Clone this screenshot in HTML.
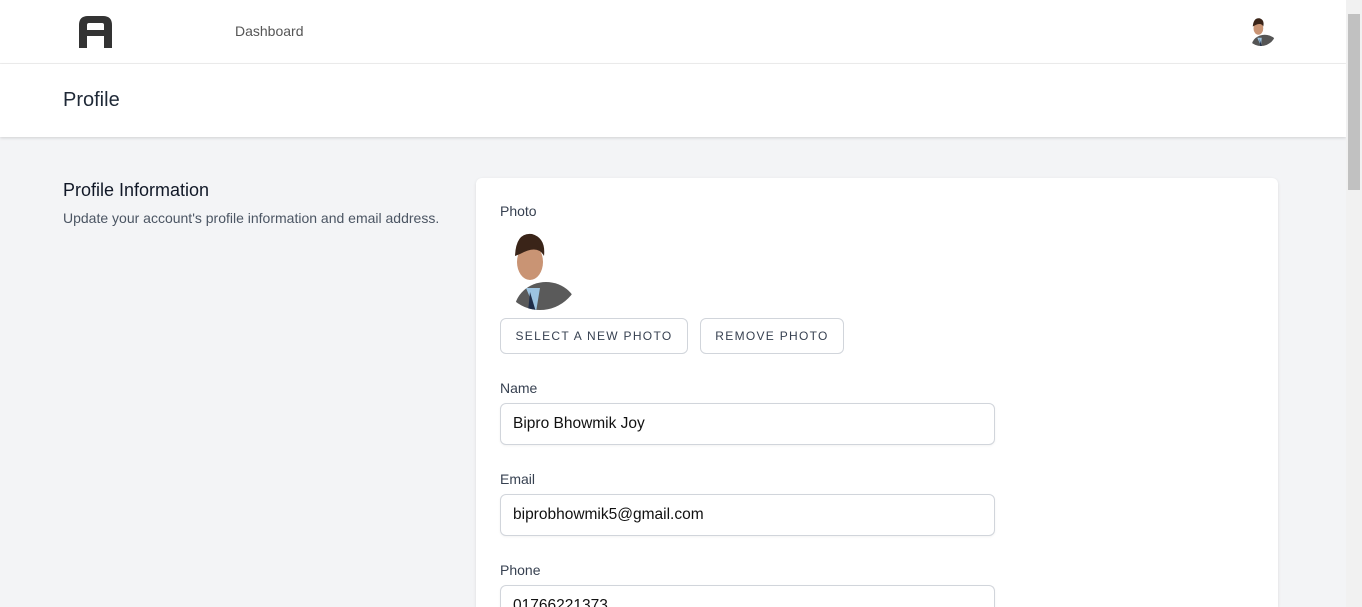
<!DOCTYPE html>
<html style="overflow:hidden;height:607px"><head><style>
*{box-sizing:border-box;margin:0;padding:0}
body{width:1362px;height:607px;overflow:hidden;font-family:"Liberation Sans",sans-serif;background:#f3f4f6;position:relative;color:#374151}
.nav{position:absolute;left:0;top:0;width:1346px;height:64px;background:#fff;border-bottom:1px solid #f0f0f0}
.hdr{position:absolute;left:0;top:64px;width:1346px;height:73px;background:#fff;box-shadow:0 1px 3px rgba(0,0,0,.15)}
.sb{position:absolute;right:0;top:0;width:16px;height:607px;background:#f1f1f1}
.sb div{position:absolute;left:2px;top:14px;width:12px;height:176px;background:#c1c1c1}
.card{position:absolute;left:476px;top:178px;width:802px;height:429px;background:#fff;border-radius:6px 6px 0 0;box-shadow:0 1px 3px rgba(0,0,0,.1)}
.lbl{position:absolute;left:500px;font-size:14px;color:#374151}
.inp{position:absolute;left:500px;width:495px;height:42px;border:1px solid #d1d5db;border-radius:6px;background:#fff;font-size:15.5px;color:#111;padding:11px 12px;box-shadow:0 1px 2px rgba(0,0,0,.05)}
.btn{position:absolute;top:318px;height:36px;border:1px solid #d1d5db;border-radius:6px;background:#fff;font-size:12px;letter-spacing:1.3px;color:#374151;text-align:center;line-height:34px}
.face{position:absolute;border-radius:50%;overflow:hidden;background:#fff}
</style></head><body>
<div class="nav">
<svg style="position:absolute;left:79px;top:16px" width="33" height="32" viewBox="0 0 33 32"><path d="M0 32V9Q0 0 9 0H24Q33 0 33 9V32H25V20H8V32ZM8 14H25V9Q25 7 23 7H10Q8 7 8 9Z" fill="#333"/></svg>
<div style="position:absolute;left:235px;top:23px;font-size:14px;color:#555">Dashboard</div>
<div class="face" style="left:1246px;top:16px;width:30px;height:30px">
<svg width="30" height="30" viewBox="0 0 80 80"><ellipse cx="50" cy="80" rx="35" ry="30" fill="#555"/><path d="M30 58L40 80L42 58Z" fill="#9cc3e0"/><path d="M36 60L38 80L42 80Z" fill="#1f2d48"/><ellipse cx="33" cy="33" rx="13" ry="17" fill="#c99474"/><path d="M18 28Q20 4 36 6Q50 10 46 28Q40 16 22 26Z" fill="#3a2418"/></svg></div>
</div>
<div class="hdr"><div style="position:absolute;left:63px;top:25px;font-size:20px;color:#1f2937">Profile</div></div>
<div style="position:absolute;left:63px;top:180px;font-size:18px;color:#111827">Profile Information</div>
<div style="position:absolute;left:63px;top:210px;font-size:14px;color:#4b5563">Update your account's profile information and email address.</div>
<div class="card"></div>
<div class="lbl" style="top:203px">Photo</div>
<div class="face" style="left:500px;top:230px;width:80px;height:80px">
<svg width="80" height="80" viewBox="0 0 80 80"><ellipse cx="46" cy="82" rx="32" ry="30" fill="#5a5a5a"/><path d="M26 58L36 82L40 58Z" fill="#9cc3e0"/><path d="M30 62L28 82L36 82Z" fill="#1f2d48"/><ellipse cx="30" cy="32" rx="13" ry="18" fill="#c99474"/><path d="M15 26Q16 2 32 4Q46 8 44 26Q38 14 20 24Z" fill="#3a2418"/></svg></div>
<div class="btn" style="left:500px;width:188px">SELECT A NEW PHOTO</div>
<div class="btn" style="left:700px;width:144px">REMOVE PHOTO</div>
<div class="lbl" style="top:380px">Name</div>
<div class="inp" style="top:403px">Bipro Bhowmik Joy</div>
<div class="lbl" style="top:471px">Email</div>
<div class="inp" style="top:494px">biprobhowmik5@gmail.com</div>
<div class="lbl" style="top:562px">Phone</div>
<div class="inp" style="top:585px;height:22px;border-bottom:none;border-radius:6px 6px 0 0">01766221373</div>
<div class="sb"><div></div></div>
</body></html>
